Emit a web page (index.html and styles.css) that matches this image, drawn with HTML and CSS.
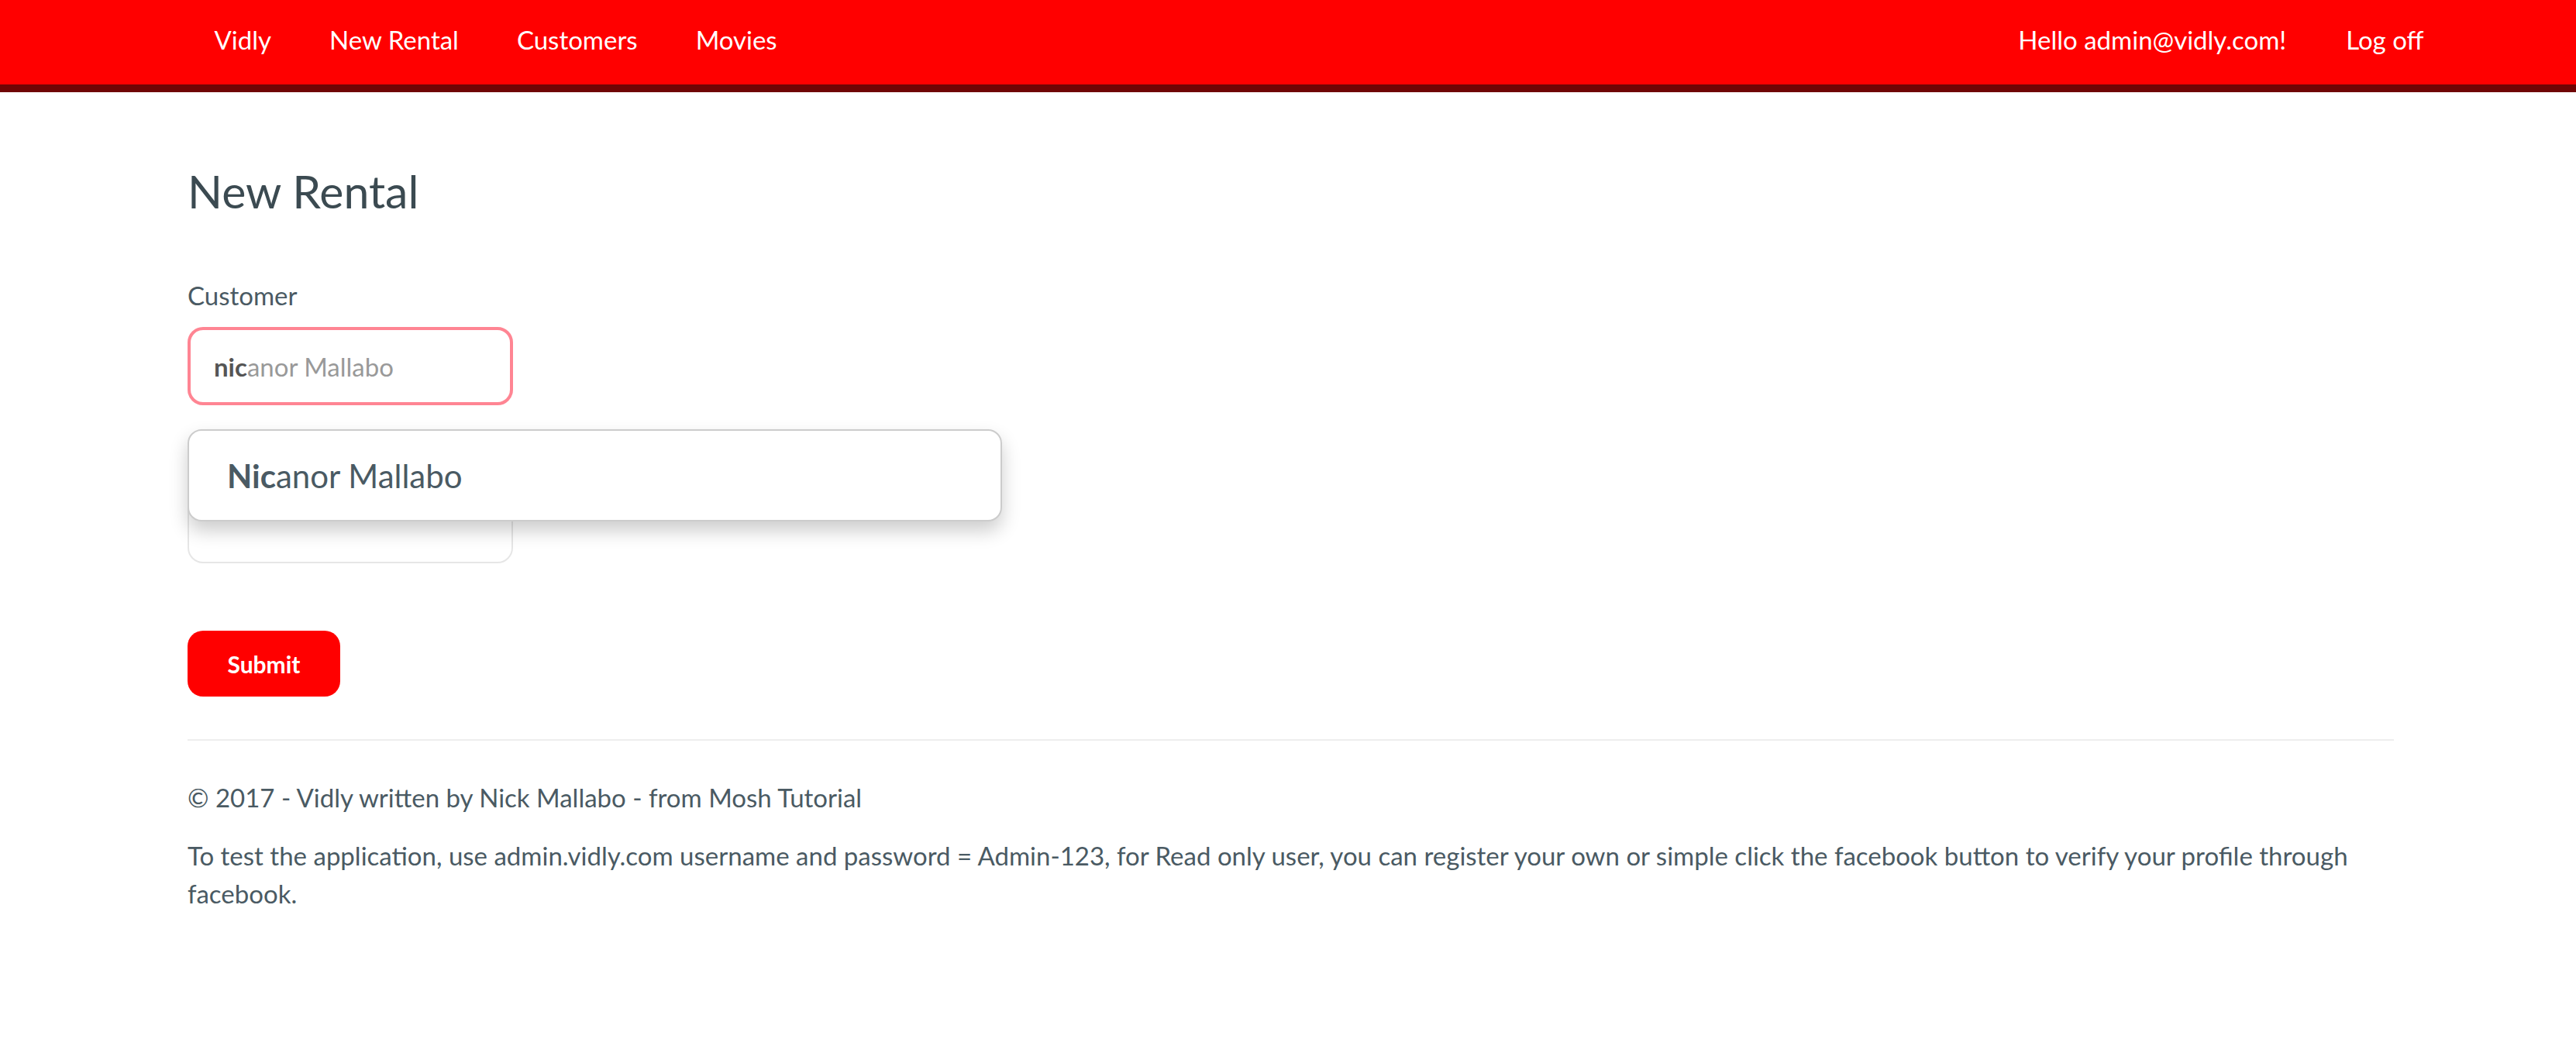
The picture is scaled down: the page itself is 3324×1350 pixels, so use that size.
FILE: index.html
```html
<!DOCTYPE html>
<html lang="en">
<head>
<meta charset="utf-8">
<title>New Rental - Vidly</title>
<link rel="stylesheet" href="styles.css">
</head>
<body>
<nav class="navbar">
  <div class="nav-inner">
    <a class="nav-link brand" href="#">Vidly</a>
    <ul class="nav-list">
      <li><a class="nav-link" href="#">New Rental</a></li>
      <li><a class="nav-link" href="#">Customers</a></li>
      <li><a class="nav-link" href="#">Movies</a></li>
    </ul>
    <ul class="nav-list nav-right">
      <li><a class="nav-link" href="#">Hello admin@vidly.com!</a></li>
      <li><a class="nav-link" href="#">Log off</a></li>
    </ul>
  </div>
</nav>
<main class="container">
  <h2 class="page-title">New Rental</h2>
  <form class="rental-form">
    <div class="form-group">
      <label class="form-label">Customer</label>
      <div class="typeahead">
        <div class="form-input focused"><span class="typed">nic</span><span class="hint">anor Mallabo</span></div>
        <div class="tt-menu">
          <div class="tt-suggestion"><strong class="tt-highlight">Nic</strong>anor Mallabo</div>
        </div>
      </div>
    </div>
    <div class="form-group">
      <span class="form-label label-spacer"></span>
      <div class="form-input"></div>
    </div>
    <button class="btn-submit" type="button">Submit</button>
  </form>
  <hr class="divider">
  <footer class="footer">
    <p class="footer-line">© 2017 - Vidly written by Nick Mallabo - from Mosh Tutorial</p>
    <p class="footer-note">To test the application, use admin.vidly.com username and password = Admin-123, for Read only user, you can register your own or simple click the facebook button to verify your profile through facebook.</p>
  </footer>
</main>
</body>
</html>
```
FILE: styles.css
```css
html, body {
  margin: 0;
  padding: 0;
  background: #ffffff;
}
body {
  font-family: Lato, "Open Sans", "Liberation Sans", sans-serif;
  font-size: 33px;
  line-height: 49px;
  color: #4a5a63;
}
.navbar {
  background: #ff0000;
  border-bottom: 10px solid #700505;
  height: 109px;
}
.nav-inner {
  display: flex;
  align-items: flex-start;
  height: 109px;
  padding-left: 239px;
  padding-right: 158px;
}
.nav-list {
  display: flex;
  list-style: none;
  margin: 0;
  padding: 0;
}
.nav-right {
  margin-left: auto;
}
.nav-link {
  display: block;
  padding: 0 37.5px;
  line-height: 102px;
  font-size: 33px;
  color: #ffffff;
  text-decoration: none;
}
.nav-right .nav-link {
  padding: 0 38.5px;
}
.container {
  width: 2847px;
  margin-left: 242px;
}
.page-title {
  margin: 95px 0 0 0;
  font-size: 59px;
  font-weight: 400;
  line-height: 66px;
  color: #3b4a51;
}
.rental-form {
  margin-top: 77px;
}
.form-group {
  margin-bottom: 38px;
}
.form-label {
  display: block;
  font-size: 33px;
  line-height: 49px;
  margin-bottom: 16px;
  color: #4a5a63;
}
.label-spacer {
  height: 49px;
}
.typeahead {
  position: relative;
}
.form-input {
  box-sizing: border-box;
  width: 420px;
  height: 101px;
  border: 2px solid #e6e6e6;
  border-radius: 20px;
  display: flex;
  align-items: center;
  padding-left: 32px;
  font-size: 33px;
  line-height: 40px;
}
.form-input.focused {
  border: 4px solid #ff8593;
  padding-left: 30px;
}
.typed {
  color: #555555;
  font-weight: 700;
}
.hint {
  color: #999999;
}
.tt-menu {
  position: absolute;
  top: calc(100% + 31px);
  left: 0;
  box-sizing: border-box;
  width: 1051px;
  height: 119px;
  background: #ffffff;
  border: 2px solid #cccccc;
  border-radius: 18px;
  box-shadow: 0 12px 24px rgba(0, 0, 0, 0.2);
  display: flex;
  align-items: center;
  z-index: 10;
}
.tt-suggestion {
  padding-left: 49px;
  font-size: 42px;
  line-height: 50px;
  color: #4a5a63;
}
.tt-highlight {
  font-weight: 700;
}
.btn-submit {
  display: block;
  margin-top: 87px;
  width: 197px;
  height: 85px;
  border: none;
  border-radius: 20px;
  background: #ff0000;
  color: #ffffff;
  font-family: Lato, "Open Sans", "Liberation Sans", sans-serif;
  font-size: 30px;
  font-weight: 700;
  padding: 0;
}
.divider {
  margin: 55px 0 0 0;
  border: 0;
  border-top: 2px solid #eeeeee;
  height: 0;
}
.footer {
  padding-top: 49px;
}
.footer-line {
  margin: 0 0 26px 0;
}
.footer-note {
  margin: 0;
}
```
